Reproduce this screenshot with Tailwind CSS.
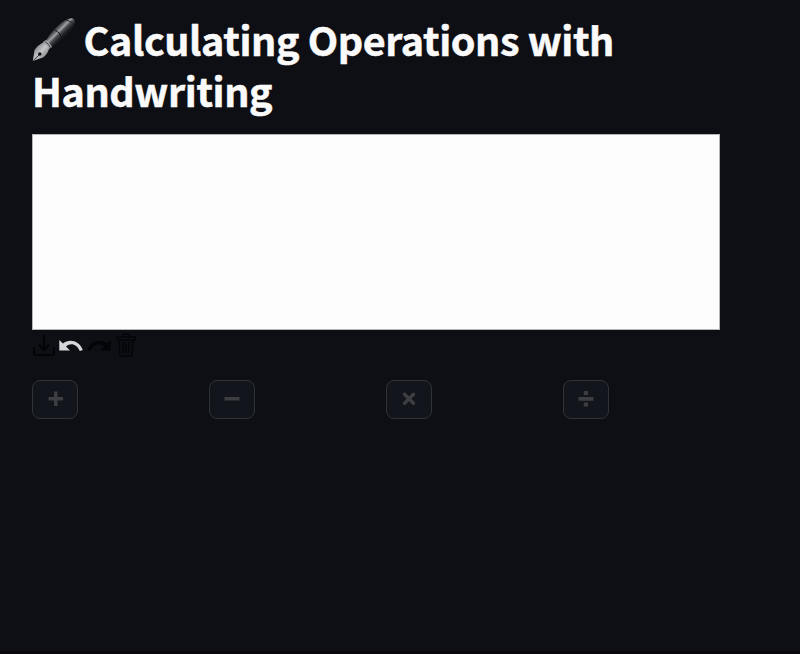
<!DOCTYPE html>
<html lang="en">
<head>
<meta charset="utf-8">
<title>Calculating Operations with Handwriting</title>
<script src="https://cdn.jsdelivr.net/npm/@tailwindcss/browser@4"></script>
</head>
<body class="h-[654px] overflow-hidden bg-[#0e0f14] font-['Noto_Sans_CJK_JP','Noto_Sans',sans-serif]">
<main class="flex h-[654px] flex-col border-b-3 border-[#08080c] pl-8 pt-[13px]">
  <h1 class="h-[121px] whitespace-nowrap text-[39.5px] font-bold leading-[51px] tracking-[-0.42px] text-[#fafafa] [-webkit-text-stroke:0.5px_#fafafa]">
    <span class="flex h-[51px]">
      <svg class="mt-[4px] mr-[5.5px] h-[46px] w-[46px] shrink-0" viewBox="0 0 46 46">
        <defs>
          <linearGradient id="barrel" gradientUnits="userSpaceOnUse" x1="20" y1="12" x2="29" y2="21">
            <stop offset="0" stop-color="#1c1e22"/><stop offset=".3" stop-color="#56585c"/><stop offset=".5" stop-color="#a0a2a5"/><stop offset=".68" stop-color="#4a4c50"/><stop offset="1" stop-color="#17191d"/>
          </linearGradient>
          <linearGradient id="nib" x1="0" y1="0" x2="1" y2="1">
            <stop offset="0" stop-color="#55575b"/><stop offset=".5" stop-color="#c5c6c8"/><stop offset="1" stop-color="#5b5d61"/>
          </linearGradient>
        </defs>
        <path d="M13 25C19 15 28 5 36 2C40 .5 43 1.5 43 5C42 12 30 23 19 31Z" fill="url(#barrel)"/>
        <path d="M23 13Q28 15 30 21" fill="none" stroke="#17191d" stroke-width="1"/>
        <path d="M34 3Q40 4 42 8" fill="none" stroke="#222428" stroke-width="1"/>
        <path d="M11 25L14 23Q18 26 20 30L17 32Z" fill="#a6a8aa"/>
        <path d="M13 24.5Q17 27 18.5 31" fill="none" stroke="#3c3e43"/>
        <path d="M.8 44L2.5 33Q6 28 11 25.5Q15.5 28 17 32Q15 38 11 40.5Z" fill="url(#nib)"/>
        <path d="M1.3 43.5L7 38" stroke="#303238"/><circle cx="7.8" cy="37" r="1.8" fill="#121418"/>
      </svg><span>Calculating Operations with</span>
    </span>
    <span class="block">Handwriting</span>
  </h1>
  <div class="h-[196px] w-[688px] shrink-0 border border-[#b5b5b8] bg-[#fdfdfd]"></div>
  <div class="flex h-[50px] w-[106px] shrink-0 pt-[3px]">
    <svg class="h-[24px] w-[24px]" viewBox="0 0 24 24" fill="none" stroke="#030408" stroke-width="2"><path d="M2 14V20Q2 22 4 22H20Q22 22 22 20V14M12 2V17M7 12L12 17L17 12"/></svg>
    <svg class="ml-[2px] h-[24px] w-[26px]" viewBox="0 0 26 24" fill="#d6d7d8"><path d="M1.3 7L5 10.5C11 5.7 21 7 24.8 17L21.8 18C18.5 10.5 12.5 9.5 8 13.4L12 17.6H1.3Z"/></svg>
    <svg class="ml-[2px] h-[24px] w-[26px]" viewBox="0 0 26 24" fill="#030408"><path d="M24.7 7L21 10.5C15 5.7 5 7 1.2 17L4.2 18C7.5 10.5 13.5 9.5 18 13.4L14 17.6H24.7Z"/></svg>
    <svg class="ml-[3px] h-[24px] w-[22px]" viewBox="0 0 22 24" fill="none" stroke="#030408" stroke-width="1.4"><path d="M2 4H20V7H2ZM8 4V1H14V4M4 7L5 22Q5 23 6 23H16Q17 23 17 22L18 7M8 9L8.5 20M11 9V20M14 9L13.5 20"/></svg>
  </div>
  <div class="flex gap-[131px]">
    <button aria-label="Add" class="flex h-[39px] w-[46px] items-center justify-center rounded-lg border border-[#303238] bg-[#12151c] pb-[2px]"><svg class="ml-px h-4 w-4" viewBox="0 0 16 16" fill="#3d3e41"><path d="M6 .5H9.5V6H15V9.5H9.5V15H6V9.5H.5V6H6Z"/></svg></button>
    <button aria-label="Subtract" class="flex h-[39px] w-[46px] items-center justify-center rounded-lg border border-[#303238] bg-[#12151c] pb-[2px]"><svg class="h-4 w-4" viewBox="0 0 16 16" fill="#3d3e41"><path d="M.5 6H15.5V9.5H.5Z"/></svg></button>
    <button aria-label="Multiply" class="flex h-[39px] w-[46px] items-center justify-center rounded-lg border border-[#303238] bg-[#12151c] pb-[2px]"><svg class="h-4 w-4" viewBox="0 0 16 16" fill="none" stroke="#3d3e41" stroke-width="3.4" stroke-linecap="round"><path d="M3.5 3.3L12.5 12.3M12.5 3.3L3.5 12.3"/></svg></button>
    <button aria-label="Divide" class="flex h-[39px] w-[46px] items-center justify-center rounded-lg border border-[#303238] bg-[#12151c] pb-[2px]"><svg class="h-4 w-4" viewBox="0 0 16 16" fill="#3d3e41"><path d="M.5 6H15.5V9.8H.5ZM5.8 0H10V4H5.8ZM5.8 11.5H10V15.5H5.8Z"/></svg></button>
  </div>
</main>
</body>
</html>
